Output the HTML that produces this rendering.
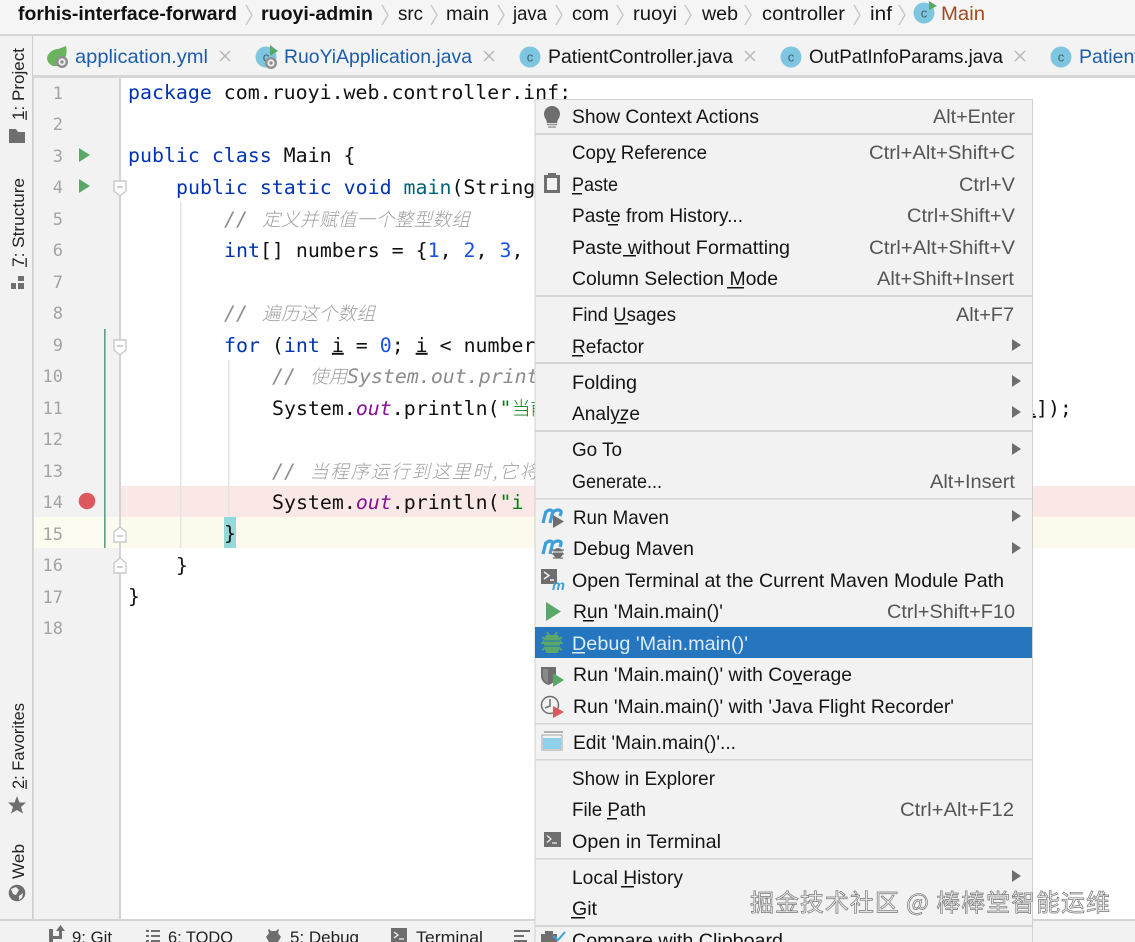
<!DOCTYPE html>
<html><head><meta charset="utf-8"><title>IDE context menu</title>
<style>
html,body{margin:0;padding:0;width:1135px;height:942px;overflow:hidden;background:#fff}
svg{display:block}
text{white-space:pre}
.u{font-family:"Liberation Sans","Noto Sans CJK SC",sans-serif;font-size:19.5px;fill:#151515}
.s{fill:#555}
.b{font-family:"Liberation Sans",sans-serif;font-size:19.5px;font-weight:bold;fill:#111}
.tb{font-family:"Liberation Sans",sans-serif;font-size:17px;fill:#222}
.c{font-family:"DejaVu Sans Mono","Liberation Mono",monospace;font-size:19.9px;fill:#111}
.k{fill:#0033b3}.n{fill:#1750eb}.f{fill:#00627a}.st{fill:#067d17}
.p{fill:#871094;font-style:italic}
.cm{font-family:"DejaVu Sans Mono","Noto Sans CJK SC",monospace;font-size:19.9px;font-style:italic;fill:#8c8c8c}
.zh{font-family:"Noto Sans CJK SC",sans-serif;font-size:18.5px;font-style:italic;fill:#a0a0a0;font-weight:300}
.ln{font-family:"DejaVu Sans Mono",monospace;font-size:17px;fill:#a3a3a3;text-anchor:end}
.ic{font-family:"Liberation Sans",sans-serif;font-size:13px;fill:#3f5f6f;text-anchor:middle}
.wm{font-family:"Noto Sans CJK SC",sans-serif;font-size:24px;fill:#f1f1f1;stroke:#777;stroke-width:.7px;paint-order:normal}
</style></head><body>
<svg xmlns="http://www.w3.org/2000/svg" width="1135" height="942" viewBox="0 0 1135 942">
<defs>
<g id="cc"><circle r="10.5" fill="#7ec5df"/><text class="ic" y="4.5">c</text></g>
<path id="ch" d="M0-10 L6 0 L0 10" fill="none" stroke="#c4c4c4" stroke-width="1.3"/>
<path id="x" d="M-5-5 L5 5 M5-5 L-5 5" stroke="#b5b5b5" stroke-width="1.4" fill="none"/>
<path id="ar" d="M0-6 L9 0 L0 6Z" fill="#6e6e6e"/>
<g id="gear"><circle r="6" fill="#8f8f8f"/><circle r="3.6" fill="#f0f0f0"/><circle r="1.7" fill="#8f8f8f"/></g>
</defs>

<!-- base regions -->
<rect width="1135" height="942" fill="#fff"/>
<rect width="1135" height="34" fill="#f5f5f5"/>
<rect y="34" width="1135" height="2" fill="#d6d6d6"/>
<rect y="36" width="1135" height="40" fill="#f3f3f3"/>
<rect x="33" y="75" width="1102" height="3" fill="#d6d6d6"/>
<rect y="36" width="33" height="884" fill="#f2f2f2"/>
<rect x="32" y="36" width="1" height="884" fill="#cfcfcf"/>
<rect x="33" y="78" width="86" height="842" fill="#f2f2f2"/>
<rect x="33" y="78" width="1" height="842" fill="#d8d8d8"/>
<rect x="119" y="78" width="2" height="842" fill="#d3d3d3"/>
<rect y="919" width="1135" height="2" fill="#d4d4d4"/>
<rect y="921" width="1135" height="21" fill="#f2f2f2"/>

<!-- highlighted lines -->
<rect x="121" y="486" width="1014" height="31" fill="#fae8e6"/>
<rect x="126" y="486" width="1" height="31" fill="#fdf5f4"/>
<rect x="34" y="517" width="85" height="31" fill="#fcfbf0"/>
<rect x="121" y="517" width="1014" height="31" fill="#fcfaed"/>
<rect x="224" y="517" width="12" height="31" fill="#93d9d9"/>
<rect x="104" y="329" width="1.6" height="219" fill="#5f9e85"/>
<rect x="180" y="202" width="1.5" height="346" fill="#e4e4e4"/>
<rect x="228" y="360" width="1.5" height="157" fill="#e4e4e4"/>

<!-- breadcrumbs -->
<text class="b" x="18" y="20" textLength="219" lengthAdjust="spacingAndGlyphs">forhis-interface-forward</text>
<use href="#ch" x="246" y="15"/>
<text class="b" x="261" y="20" textLength="112" lengthAdjust="spacingAndGlyphs">ruoyi-admin</text>
<use href="#ch" x="382" y="15"/>
<text class="u" x="398" y="20" textLength="25" lengthAdjust="spacingAndGlyphs">src</text>
<use href="#ch" x="431" y="15"/>
<text class="u" x="446" y="20" textLength="43" lengthAdjust="spacingAndGlyphs">main</text>
<use href="#ch" x="498" y="15"/>
<text class="u" x="513" y="20" textLength="34" lengthAdjust="spacingAndGlyphs">java</text>
<use href="#ch" x="556" y="15"/>
<text class="u" x="572" y="20" textLength="37" lengthAdjust="spacingAndGlyphs">com</text>
<use href="#ch" x="617" y="15"/>
<text class="u" x="633" y="20" textLength="44" lengthAdjust="spacingAndGlyphs">ruoyi</text>
<use href="#ch" x="685" y="15"/>
<text class="u" x="702" y="20" textLength="36" lengthAdjust="spacingAndGlyphs">web</text>
<use href="#ch" x="745" y="15"/>
<text class="u" x="762" y="20" textLength="83" lengthAdjust="spacingAndGlyphs">controller</text>
<use href="#ch" x="854" y="15"/>
<text class="u" x="870" y="20" textLength="22" lengthAdjust="spacingAndGlyphs">inf</text>
<use href="#ch" x="899" y="15"/>
<use href="#cc" x="924" y="13"/>
<path d="M929 1 L937 6 L929 10Z" fill="#59a869"/>
<text class="u" x="941" y="20" textLength="44" lengthAdjust="spacingAndGlyphs" style="fill:#a5481d">Main</text>

<!-- tabs -->
<path d="M47 58 C48 52 54 49 58 49 L66 46 C68 54 65 62 58 66 L53 66 C50 65 47 62 47 58Z" fill="#6cb35f"/>
<use href="#gear" x="62" y="62"/>
<text class="u" x="75" y="63" textLength="133" lengthAdjust="spacingAndGlyphs" style="fill:#1b5daa">application.yml</text>
<use href="#x" x="225" y="56"/>
<use href="#cc" x="266" y="57"/>
<path d="M270 45 L278 51 L270 56Z" fill="#59a869"/>
<use href="#gear" x="271" y="63"/>
<text class="u" x="284" y="63" textLength="188" lengthAdjust="spacingAndGlyphs" style="fill:#1b5daa">RuoYiApplication.java</text>
<use href="#x" x="489" y="56"/>
<use href="#cc" x="530" y="57"/>
<text class="u" x="548" y="63" textLength="185" lengthAdjust="spacingAndGlyphs">PatientController.java</text>
<use href="#x" x="750" y="56"/>
<use href="#cc" x="791" y="57"/>
<text class="u" x="809" y="63" textLength="194" lengthAdjust="spacingAndGlyphs">OutPatInfoParams.java</text>
<use href="#x" x="1020" y="56"/>
<use href="#cc" x="1061" y="57"/>
<text class="u" x="1079" y="63" style="fill:#1b5daa">PatientController.java</text>

<!-- left tool strip -->
<text class="tb" transform="translate(24,120) rotate(-90)" textLength="72" lengthAdjust="spacingAndGlyphs">1: Project</text>
<rect x="25.500" y="111" width="1.300" height="9" fill="#222"/>
<path d="M9 129 H16 L18 132 H25 V143 H9Z" fill="#6e6e6e"/>
<text class="tb" transform="translate(24,267) rotate(-90)" textLength="89" lengthAdjust="spacingAndGlyphs">7: Structure</text>
<rect x="25.500" y="258" width="1.300" height="9" fill="#222"/>
<path d="M11 283 H16 V289 H11Z M18 283 H24 V289 H18Z M18 276 H24 V281 H18Z" fill="#6e6e6e"/>
<text class="tb" transform="translate(24,789) rotate(-90)" textLength="86" lengthAdjust="spacingAndGlyphs">2: Favorites</text>
<rect x="25.500" y="780" width="1.300" height="9" fill="#222"/>
<path d="M17 796 L19.5 802.5 L26 802.5 L21 807 L23 813.5 L17 810 L11 813.5 L13 807 L8 802.5 L14.500 802.5Z" fill="#6e6e6e"/>
<text class="tb" transform="translate(24,879) rotate(-90)" textLength="35" lengthAdjust="spacingAndGlyphs">Web</text>
<circle cx="17" cy="893" r="8.300" fill="#6e6e6e"/>
<path d="M11 889 L16 887 L19 890 L16 895 L13 894Z M19 896 L23 893 L22 898 L19 900Z" fill="#f2f2f2"/>

<!-- bottom strip -->
<path d="M49 942 V929 H53 V942Z M53 936 H59 V931 H56 L60.500 925 L65 931 H62 V939 H53Z" fill="#6e6e6e"/>
<text class="tb" x="72" y="943" textLength="40" lengthAdjust="spacingAndGlyphs">9: Git</text>
<path d="M146 930 h3 v2 h-3z M151 930 h9 v2 h-9z M146 935 h3 v2 h-3z M151 935 h9 v2 h-9z M146 940 h3 v2 h-3z M151 940 h9 v2 h-9z" fill="#6e6e6e"/>
<text class="tb" x="168" y="943" textLength="65" lengthAdjust="spacingAndGlyphs">6: TODO</text>
<path d="M269 929 L271 931 H276 L278 929 L279 930 L278 933 L281 937 L278 942 H269 L266 937 L269 933 L268 930Z" fill="#6e6e6e"/>
<text class="tb" x="290" y="943" textLength="69" lengthAdjust="spacingAndGlyphs">5: Debug</text>
<rect x="391" y="928" width="16" height="14" fill="#6e6e6e"/>
<path d="M394 932 L398 935 L394 938 M399 939 H404" stroke="#f2f2f2" stroke-width="1.300" fill="none"/>
<text class="tb" x="416" y="943" textLength="67" lengthAdjust="spacingAndGlyphs">Terminal</text>
<path d="M514 930 h16 v2 h-16z M514 935 h10 v2 h-10z M514 940 h13 v2 h-13z" fill="#6e6e6e"/>

<!-- line numbers -->
<text class="ln" x="63" y="99">1</text><text class="ln" x="63" y="130">2</text><text class="ln" x="63" y="162">3</text>
<text class="ln" x="63" y="193">4</text><text class="ln" x="63" y="225">5</text><text class="ln" x="63" y="256">6</text>
<text class="ln" x="63" y="288">7</text><text class="ln" x="63" y="319">8</text><text class="ln" x="63" y="351">9</text>
<text class="ln" x="63" y="382">10</text><text class="ln" x="63" y="414">11</text><text class="ln" x="63" y="445">12</text>
<text class="ln" x="63" y="477">13</text><text class="ln" x="63" y="508">14</text><text class="ln" x="63" y="540">15</text>
<text class="ln" x="63" y="571">16</text><text class="ln" x="63" y="603">17</text><text class="ln" x="63" y="634">18</text>

<!-- gutter marks -->
<path d="M79 148 L90 155 L79 162Z" fill="#59a869"/>
<path d="M79 179 L90 186 L79 193Z" fill="#59a869"/>
<circle cx="87" cy="501" r="8.300" fill="#db5860"/>
<g fill="#fff" stroke="#c9c9c9" stroke-width="1.400">
<path d="M114 181 H126 V191 L120 196 L114 191Z"/>
<path d="M114 340 H126 V350 L120 355 L114 350Z"/>
<path d="M114 542 H126 V532 L120 527 L114 532Z"/>
<path d="M114 573 H126 V563 L120 558 L114 563Z"/>
</g>
<path d="M117 187 H123 M117 346 H123 M117 536 H123 M117 567 H123" stroke="#b5b5b5" stroke-width="1.200"/>

<!-- code -->
<g transform="translate(0,0.800)">
<text class="c" x="128" y="98"><tspan class="k">package</tspan> com.ruoyi.web.controller.inf;</text>
<text class="c" x="128" y="161"><tspan class="k">public class</tspan> Main {</text>
<text class="c" x="176" y="193"><tspan class="k">public static void</tspan> <tspan class="f">main</tspan>(String[] args) {</text>
<text class="cm" x="224" y="225">//</text>
<text class="zh" x="262" y="225" textLength="208">定义并赋值一个整型数组</text>
<text class="c" x="224" y="256"><tspan class="k">int</tspan>[] numbers = {<tspan class="n">1</tspan>, <tspan class="n">2</tspan>, <tspan class="n">3</tspan>, <tspan class="n">4</tspan>, <tspan class="n">5</tspan>};</text>
<text class="cm" x="224" y="319">//</text>
<text class="zh" x="262" y="319" textLength="113">遍历这个数组</text>
<text class="c" x="224" y="351"><tspan class="k">for</tspan> (<tspan class="k">int</tspan> <tspan text-decoration="underline">i</tspan> = <tspan class="n">0</tspan>; <tspan text-decoration="underline">i</tspan> &lt; numbers.length; i++) {</text>
<text class="cm" x="272" y="382">//</text>
<text class="zh" x="310" y="382" textLength="37">使用</text>
<text class="cm" x="347" y="382">System.out.println</text>
<text class="c" x="272" y="414">System.<tspan class="p">out</tspan>.println(<tspan class="st">"</tspan></text>
<text class="zh" x="512" y="414" style="font-style:normal;fill:#067d17">当前</text>
<text class="c" x="1024" y="414"><tspan text-decoration="underline">i</tspan>]);</text>
<text class="cm" x="272" y="477">//</text>
<text class="zh" x="310" y="477" textLength="228">当程序运行到这里时,它将</text>
<text class="c" x="272" y="508">System.<tspan class="p">out</tspan>.println(<tspan class="st">"i </tspan></text>
<text class="c" x="224" y="539">}</text>
<text class="c" x="176" y="571">}</text>
<text class="c" x="128" y="602">}</text>
</g>

<!-- context menu -->
<rect x="535" y="99.500" width="497.500" height="843" fill="#f2f2f2" stroke="#d0d0d0"/>
<rect x="535" y="627" width="497" height="31" fill="#2675bf"/>
<g fill="#d5d5d5">
<rect x="535" y="133" width="497" height="2"/>
<rect x="535" y="295" width="497" height="2"/>
<rect x="535" y="362" width="497" height="2"/>
<rect x="535" y="430" width="497" height="2"/>
<rect x="535" y="498" width="497" height="1.500"/>
<rect x="535" y="723" width="497" height="1.500"/>
<rect x="535" y="759" width="497" height="1.500"/>
<rect x="535" y="858" width="497" height="1.500"/>
<rect x="535" y="925" width="497" height="2"/>
</g>

<text class="u" x="572" y="123" textLength="187" lengthAdjust="spacingAndGlyphs">Show Context Actions</text>
<text class="u s" x="933" y="123" textLength="82" lengthAdjust="spacingAndGlyphs">Alt+Enter</text>
<text class="u" x="572" y="159" textLength="135" lengthAdjust="spacingAndGlyphs">Copy Reference</text>
<text class="u s" x="869" y="159" textLength="146" lengthAdjust="spacingAndGlyphs">Ctrl+Alt+Shift+C</text>
<text class="u" x="572" y="191" textLength="46" lengthAdjust="spacingAndGlyphs">Paste</text>
<text class="u s" x="959" y="191" textLength="56" lengthAdjust="spacingAndGlyphs">Ctrl+V</text>
<text class="u" x="572" y="222" textLength="171" lengthAdjust="spacingAndGlyphs">Paste from History...</text>
<text class="u s" x="907" y="222" textLength="108" lengthAdjust="spacingAndGlyphs">Ctrl+Shift+V</text>
<text class="u" x="572" y="254" textLength="218" lengthAdjust="spacingAndGlyphs">Paste without Formatting</text>
<text class="u s" x="869" y="254" textLength="146" lengthAdjust="spacingAndGlyphs">Ctrl+Alt+Shift+V</text>
<text class="u" x="572" y="285" textLength="206" lengthAdjust="spacingAndGlyphs">Column Selection Mode</text>
<text class="u s" x="877" y="285" textLength="137" lengthAdjust="spacingAndGlyphs">Alt+Shift+Insert</text>
<text class="u" x="572" y="321" textLength="104" lengthAdjust="spacingAndGlyphs">Find Usages</text>
<text class="u s" x="956" y="321" textLength="58" lengthAdjust="spacingAndGlyphs">Alt+F7</text>
<text class="u" x="572" y="353" textLength="72" lengthAdjust="spacingAndGlyphs">Refactor</text>
<text class="u" x="572" y="389" textLength="65" lengthAdjust="spacingAndGlyphs">Folding</text>
<text class="u" x="572" y="420" textLength="68" lengthAdjust="spacingAndGlyphs">Analyze</text>
<text class="u" x="572" y="456" textLength="50" lengthAdjust="spacingAndGlyphs">Go To</text>
<text class="u" x="572" y="488" textLength="90" lengthAdjust="spacingAndGlyphs">Generate...</text>
<text class="u s" x="930" y="488" textLength="85" lengthAdjust="spacingAndGlyphs">Alt+Insert</text>
<text class="u" x="573" y="524" textLength="96" lengthAdjust="spacingAndGlyphs">Run Maven</text>
<text class="u" x="573" y="555" textLength="121" lengthAdjust="spacingAndGlyphs">Debug Maven</text>
<text class="u" x="572" y="587" textLength="432" lengthAdjust="spacingAndGlyphs">Open Terminal at the Current Maven Module Path</text>
<text class="u" x="573" y="618" textLength="150" lengthAdjust="spacingAndGlyphs">Run 'Main.main()'</text>
<text class="u s" x="887" y="618" textLength="128" lengthAdjust="spacingAndGlyphs">Ctrl+Shift+F10</text>
<text class="u" x="572" y="650" textLength="176" lengthAdjust="spacingAndGlyphs" style="fill:#dcecfa">Debug 'Main.main()'</text>
<text class="u" x="573" y="681" textLength="279" lengthAdjust="spacingAndGlyphs">Run 'Main.main()' with Coverage</text>
<text class="u" x="573" y="713" textLength="381" lengthAdjust="spacingAndGlyphs">Run 'Main.main()' with 'Java Flight Recorder'</text>
<text class="u" x="573" y="749" textLength="163" lengthAdjust="spacingAndGlyphs">Edit 'Main.main()'...</text>
<text class="u" x="572" y="785" textLength="143" lengthAdjust="spacingAndGlyphs">Show in Explorer</text>
<text class="u" x="572" y="816" textLength="74" lengthAdjust="spacingAndGlyphs">File Path</text>
<text class="u s" x="900" y="816" textLength="114" lengthAdjust="spacingAndGlyphs">Ctrl+Alt+F12</text>
<text class="u" x="572" y="848" textLength="149" lengthAdjust="spacingAndGlyphs">Open in Terminal</text>
<text class="u" x="572" y="884" textLength="111" lengthAdjust="spacingAndGlyphs">Local History</text>
<text class="u" x="572" y="915" textLength="25" lengthAdjust="spacingAndGlyphs">Git</text>
<text class="u" x="572" y="947" textLength="211" lengthAdjust="spacingAndGlyphs">Compare with Clipboard</text>

<!-- mnemonic underlines -->
<g fill="#111">
<rect x="607" y="161" width="9" height="1.500"/>
<rect x="572" y="193" width="10" height="1.500"/>
<rect x="608" y="224" width="10" height="1.500"/>
<rect x="623" y="255" width="13" height="1.500"/>
<rect x="727" y="287" width="17" height="1.500"/>
<rect x="615" y="323" width="13" height="1.500"/>
<rect x="572" y="355" width="11" height="1.500"/>
<rect x="617" y="422" width="9" height="1.500"/>
<rect x="583" y="620" width="11" height="1.500"/>
<rect x="793" y="683" width="9" height="1.500"/>
<rect x="607" y="818" width="10" height="1.500"/>
<rect x="621" y="886" width="13" height="1.500"/>
<rect x="571" y="917" width="14" height="1.500"/>
</g>
<rect x="572" y="652" width="13" height="1.500" fill="#dcecfa"/>

<!-- submenu arrows -->
<use href="#ar" x="1012" y="345"/><use href="#ar" x="1012" y="381"/><use href="#ar" x="1012" y="412"/>
<use href="#ar" x="1012" y="449"/><use href="#ar" x="1012" y="516"/><use href="#ar" x="1012" y="548"/>
<use href="#ar" x="1012" y="876"/>

<!-- menu icons -->
<path d="M552 106 C557 106 560 110 560 114 C560 118 557 120 557 123 H547 C547 120 544 118 544 114 C544 110 547 106 552 106Z" fill="#6e6e6e"/>
<path d="M547 124.500 H557 M548 127 H556" stroke="#8a8a8a" stroke-width="1.200"/>
<rect x="545.500" y="176.500" width="13" height="15" fill="none" stroke="#6e6e6e" stroke-width="3"/>
<rect x="548" y="173" width="8" height="4" fill="#6e6e6e"/>

<!-- maven glyphs -->
<path d="M543 523 L546 511 M545.500 513 C548 509 553 509 552.500 513 L550 523 M552.500 513 C555 509 562 509 561 513 L560 516" fill="none" stroke="#3d9fd8" stroke-width="3.200"/>
<path d="M553 515 L564 521.500 L553 528Z" fill="#6e6e6e"/>
<path d="M543 554 L546 542 M545.500 544 C548 540 553 540 552.500 544 L550 554 M552.500 544 C555 540 562 540 561 544 L560 547" fill="none" stroke="#3d9fd8" stroke-width="3.200"/>
<circle cx="558" cy="553" r="5" fill="#6e6e6e"/><path d="M552 550 H564 M552 554 H564 M553 558 H563" stroke="#6e6e6e" stroke-width="1.300"/>
<path d="M553 552 H563" stroke="#f2f2f2" stroke-width="1"/>
<rect x="541" y="569" width="16" height="15" fill="#6e6e6e"/>
<path d="M544 572 L549 575.500 L544 579 M550 580 H554" stroke="#f2f2f2" stroke-width="1.400" fill="none"/>
<text x="552" y="590" font-family="Liberation Sans,sans-serif" font-weight="bold" font-style="italic" font-size="14" fill="#3d9fd8" textLength="13" lengthAdjust="spacingAndGlyphs">m</text>
<path d="M546 602 L561 611.500 L546 621Z" fill="#59a869"/>
<!-- debug bug icon on selected row -->
<g fill="#59a869">
<path d="M546 635 H558 L561 641 L558 653 H546 L543 641Z"/>
<path d="M542 637 L546 640 M562 637 L558 640 M541 643 H563 M542 650 L546 647 M562 650 L558 647 M547 632 L549 635 M557 632 L555 635" stroke="#59a869" stroke-width="1.800"/>
</g>
<path d="M544 641 H560 M544 646 H560" stroke="#2675bf" stroke-width="1"/>
<path d="M541 667 H556 V676 C556 681 552 684 548.500 685 C545 684 541 681 541 676Z" fill="#6e6e6e"/>
<path d="M548 669 V683 C545 682 543 679 543 676 V669Z" fill="#8a8a8a"/>
<path d="M553 673 L564 680 L553 687Z" fill="#59a869"/>
<circle cx="550" cy="705" r="8.500" fill="none" stroke="#6e6e6e" stroke-width="1.500"/>
<path d="M550 699 V706 L545 708" fill="none" stroke="#6e6e6e" stroke-width="1.500"/>
<path d="M553 706 L564 712 L553 718Z" fill="#db5860"/>
<rect x="544" y="731" width="19" height="2" fill="#b0b0b0"/>
<rect x="542" y="735" width="20" height="15" fill="#f2f2f2" stroke="#a5a5a5"/>
<rect x="543" y="738" width="18" height="11" fill="#8ed0ea"/>
<rect x="544" y="832" width="17" height="15" fill="#6e6e6e"/>
<path d="M547 835.500 L551 839 L547 842.500 M552 843 H557" stroke="#f2f2f2" stroke-width="1.300" fill="none"/>
<rect x="541" y="934" width="16" height="8" fill="#6e6e6e"/>
<rect x="545" y="931" width="8" height="3" fill="#6e6e6e"/>
<path d="M553 936 L558 940 L565 932" stroke="#3d9fd8" stroke-width="2" fill="none"/>

<!-- watermark -->
<text class="wm" x="750" y="911" textLength="360">掘金技术社区 @ 棒棒堂智能运维</text>
</svg>
</body></html>
